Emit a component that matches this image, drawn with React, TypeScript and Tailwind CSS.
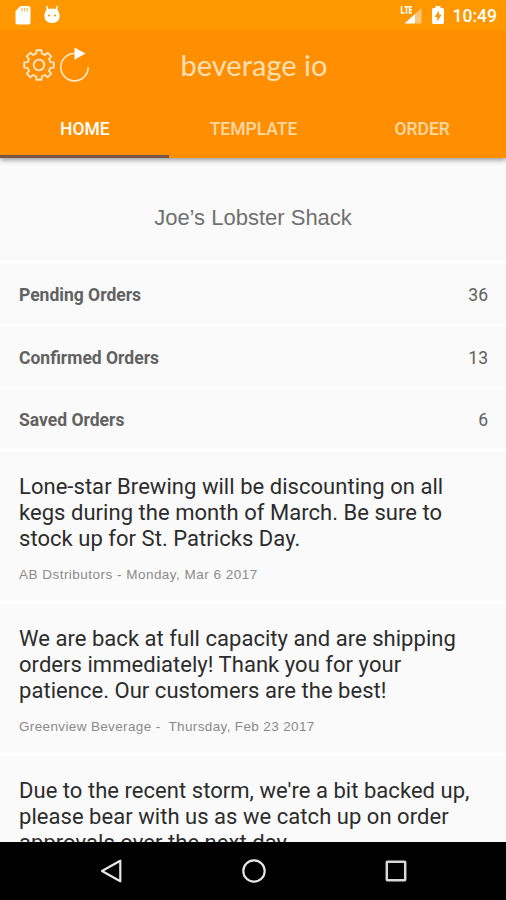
import React from 'react';

const orders = [
  { label: "Pending Orders", count: 36, row: "h-[63px] border-[#fefefe]" },
  { label: "Confirmed Orders", count: 13, row: "h-[63px] border-[#fcfcfc]" },
  { label: "Saved Orders", count: 6, row: "h-[62px] border-[#fefefe]" },
];

const posts = [
  {
    lines: [
      "Lone-star Brewing will be discounting on all",
      "kegs during the month of March. Be sure to",
      "stock up for St. Patricks Day.",
    ],
    meta: "AB Dstributors - Monday, Mar 6 2017",
    metaTracking: "tracking-[0.48px]",
  },
  {
    lines: [
      "We are back at full capacity and are shipping",
      "orders immediately! Thank you for your",
      "patience. Our customers are the best!",
    ],
    meta: "Greenview Beverage -  Thursday, Feb 23 2017",
    metaTracking: "tracking-[0.36px]",
  },
  {
    lines: [
      "Due to the recent storm, we're a bit backed up,",
      "please bear with us as we catch up on order",
      "approvals over the next day.",
    ],
    meta: "",
    metaTracking: "",
  },
];

// Eight-toothed gear outline around (16, 16)
const gearPath = () => {
  const at = (r: number, deg: number) => {
    const a = (deg * Math.PI) / 180;
    return `${(16 + r * Math.cos(a)).toFixed(2)} ${(16 + r * Math.sin(a)).toFixed(2)}`;
  };
  const parts: string[] = [];
  for (let i = 0; i < 8; i++) {
    const d = i * 45;
    parts.push(`${i === 0 ? 'M' : 'A11.6 11.6 0 0 1 '}${at(11.6, d - 14)}`);
    parts.push(`L${at(15, d - 10)}L${at(15, d + 10)}L${at(11.6, d + 14)}`);
  }
  return parts.join('') + `A11.6 11.6 0 0 1 ${at(11.6, 346)}Z`;
};

const StatusBar: React.FC = () => (
  <div className="flex h-[30px] items-center bg-[#ff9800] pl-[15px] pr-[9px] text-white">
    <svg className="h-5 w-4" viewBox="0 0 16 20">
      <path fill="#fff" d="M5.5 1H13.500Q15.500 1 15.500 3V17.500Q15.500 19.500 13.500 19.500H2.500Q.5 19.500 .5 17.500V6Z" />
      <path stroke="#ffb65c" strokeWidth="1.300" d="M7 3v3.500M9.600 3v3.500M12.200 3v3.500" />
    </svg>
    <svg className="ml-[13px] h-5 w-4" viewBox="0 0 16 20">
      <path fill="#fff" d="M3 .5l1.500 3.500Q8 3.200 11.500 4l1.500-3.500 1 .5-.6 4Q15.700 7 15.700 10.500 15.500 18 8 18 .5 18 .3 10.500 .3 7 2.600 5L2 1Z" />
      <circle cx="5" cy="10.500" r="1.100" fill="#ff9800" />
      <circle cx="11" cy="10.500" r="1.100" fill="#ff9800" />
    </svg>
    <svg className="ml-auto h-5 w-[22px]" viewBox="0 0 22 20">
      <path fill="none" stroke="#fff" strokeWidth="1.500" d="M1.500 1v7h3M4.500 1.700h4M6.500 1.700v7M12 1.700H9.500v6.300H12M9.500 4.800H12" />
      <path fill="#ffc477" d="M21.500 3v15.500H15V9Z" />
      <path fill="#fff" d="M15 9v9.500H4.500Z" />
    </svg>
    <svg className="ml-[10px] h-5 w-3" viewBox="0 0 12 20">
      <path fill="#fff" d="M3.500 1h5v2H10.500q1.500 0 1.500 1.500V17.500q0 1.500-1.500 1.500H1.500Q0 19 0 17.500V4.500Q0 3 1.500 3h2Z" />
      <path fill="#ff9800" d="M7 5.500v4.200h2.700L5.200 16.500v-4.600H2.500Z" />
    </svg>
    <span className="ml-[9px] pt-0.5 text-[17.500px] font-medium leading-[28px]">10:49</span>
  </div>
);

const Toolbar: React.FC = () => (
  <div className="grid h-[70px] grid-cols-[1fr_auto_1fr] items-center">
    <div className="flex items-center pl-[23px]">
      <svg className="h-8 w-8" viewBox="0 0 32 32" fill="none" stroke="#ffe8cc" strokeWidth="1.800" strokeLinejoin="round">
        <path d={gearPath()} />
        <circle cx="16" cy="16" r="5.300" />
      </svg>
      <svg className="ml-[4px] h-[36px] w-[32px]" viewBox="0 0 32 36">
        <path fill="none" stroke="#ffe8cc" strokeWidth="1.600" d="M15.500 6.500A13.700 13.700 0 1 0 29.200 20.200" />
        <path fill="#fff" d="M15.500 .5L26.500 6.500L15.500 12.700Z" />
      </svg>
    </div>
    <h1 className="pl-[2px] font-['Lato',sans-serif] text-[29px] leading-[34px] text-[#ffdfb5]">beverage io</h1>
    <div />
  </div>
);

const Tabs: React.FC = () => (
  <div className="grid h-[58px] grid-cols-3 text-center text-[17.500px] font-medium leading-[58px] text-[#ffd8a5]">
    <div className="h-[58px] border-b-[3px] border-[#795548] pl-px text-white">HOME</div>
    <div className="pl-px">TEMPLATE</div>
    <div className="pl-px">ORDER</div>
  </div>
);

const NavBar: React.FC = () => (
  <div className="flex h-[58px] shrink-0 items-center justify-between bg-black pl-[98px] pr-[96px]">
    <svg className="h-7 w-7" viewBox="0 0 28 28" fill="none" stroke="#e6e6e6" strokeWidth="2.200" strokeLinejoin="round">
      <path d="M22.300 3.700V24.300L4 14Z" />
    </svg>
    <svg className="h-7 w-7" viewBox="0 0 28 28" fill="none" stroke="#e6e6e6" strokeWidth="2.200">
      <circle cx="14" cy="14" r="10.700" />
    </svg>
    <svg className="h-7 w-7" viewBox="0 0 28 28" fill="none" stroke="#d8d8d8" strokeWidth="2.500">
      <rect x="4.800" y="4.800" width="18.400" height="18.400" rx=".5" />
    </svg>
  </div>
);

const App: React.FC = () => {
  return (
    <div className="flex h-[900px] w-[506px] flex-col overflow-hidden bg-[#fafafa] font-['Roboto',sans-serif]">
      <header className="z-10 shrink-0 bg-[#ff8f00] shadow-[0_2px_5px_rgba(0,0,0,0.4)]">
        <StatusBar />
        <Toolbar />
        <Tabs />
      </header>

      <main className="min-h-0 flex-1 overflow-hidden">
        <h2 className="h-[106px] border-b-4 border-[#fefefe] pt-[44px] text-center font-['Liberation_Sans',sans-serif] text-[22px] leading-8 text-[#707070]">
          Joe’s Lobster Shack
        </h2>
        {orders.map((order) => (
          <div
            key={order.label}
            className={`flex items-center justify-between border-b-4 pl-[19px] pr-[18px] pt-[3px] text-[17.500px] text-[#616161] ${order.row}`}
          >
            <span className="font-bold">{order.label}</span>
            <span>{order.count}</span>
          </div>
        ))}
        {posts.map((post) => (
          <article key={post.lines[0]} className="h-[152px] border-b-4 border-[#fdfdfd] pl-[19px] pt-[22px]">
            <div className="text-[22px] leading-[26px] tracking-[0.04px] text-[#2c2c2c]">
              {post.lines.map((line) => (
                <p key={line} className="whitespace-nowrap">{line}</p>
              ))}
            </div>
            <p className={`mt-[13px] whitespace-pre font-['Liberation_Sans',sans-serif] text-[13.500px] leading-5 text-[#8a8a8a] ${post.metaTracking}`}>
              {post.meta}
            </p>
          </article>
        ))}
      </main>

      <NavBar />
    </div>
  );
};

export default App;
